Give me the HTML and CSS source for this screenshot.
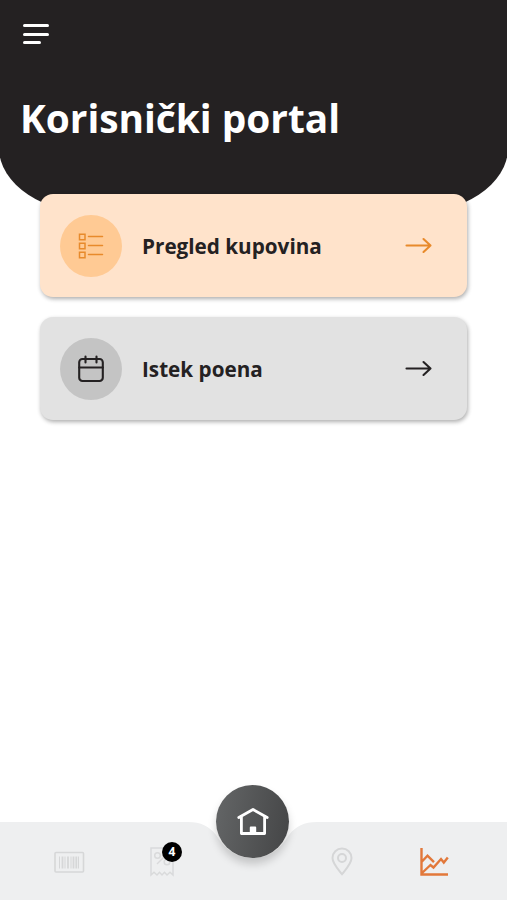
FILE: index.html
```html
<!DOCTYPE html>
<html lang="sr-Latn">
<head>
<meta charset="utf-8">
<meta name="viewport" content="width=device-width, initial-scale=1">
<title>Korisnički portal</title>
<link rel="stylesheet" href="styles.css">
</head>
<body>
<div class="app">
  <header class="header">
    <button class="menu" aria-label="Meni"><span></span><span></span><span class="short"></span></button>
    <h1>Korisnički portal</h1>
  </header>
  <main class="cards">
    <a class="card card-orange">
      <span class="card-icon">
        <svg width="28" height="28" viewBox="0 0 28 28" fill="none" stroke="#e88a2b" stroke-width="1.5" stroke-linecap="round"><path d="M2.500 2.200h5.500v5.500h-5.500zM2.500 11.200h5.500v5.500h-5.500zM2.500 20.200h5.500v5.500h-5.500z"/><path d="M11.500 4.500h14M11.500 13.500h14M11.500 22.500h14"/></svg>
      </span>
      <span class="card-title">Pregled kupovina</span>
      <svg class="arrow" width="28" height="18" viewBox="0 0 28 18"><path d="M1.500 8.500h24M18.500 2l7 6.500-7 6.500"/></svg>
    </a>
    <a class="card card-gray">
      <span class="card-icon">
        <svg width="28" height="28" viewBox="0 0 28 28" fill="none" stroke="#242122" stroke-width="2.1" stroke-linecap="round"><rect x="2.2" y="4" width="23.6" height="22" rx="3.2"/><path d="M2.200 12.500h23.600M8.500 1.500v6M19.500 1.500v6"/></svg>
      </span>
      <span class="card-title">Istek poena</span>
      <svg class="arrow" width="28" height="18" viewBox="0 0 28 18"><path d="M1.500 8.500h24M18.500 2l7 6.500-7 6.500"/></svg>
    </a>
  </main>
  <nav class="nav">
    <svg class="nav-bg" width="507" height="78" viewBox="0 0 507 78"><path d="M0 0H188C201 0 209 4 216 13C226 29 237 36 252.500 36S279 29 289 13C296 4 304 0 317 0H507V78H0Z" fill="#eeeff0"/></svg>
    <a class="tab"><svg width="32" height="24" viewBox="0 0 32 24" fill="none" stroke="#d6d7d8"><rect x="2" y="2.500" width="28.500" height="19.500" rx="1" stroke-width="1.600"/><path d="M6.500 6.500v12M12 6.500v12M18 6.500v12M25.500 6.500v12" stroke-width="1"/><path d="M9.500 6.500v12M15 6.500v12M20.500 6.500v12M23.300 6.500v12" stroke-width="1.800"/></svg></a>
    <a class="tab tab-coupons"><svg width="28" height="32" viewBox="0 0 28 32" fill="none" stroke="#d9dadb" stroke-width="1.500"><path d="M3 2h22v27l-3-2.700-3 2.700-2.500-2.700-2.500 2.700-2.500-2.700L9 29l-3-2.700L3 29Z"/><path d="M20 7L9 18"/><circle cx="9.500" cy="9.500" r="2.800"/><circle cx="19" cy="16" r="2.800"/></svg><span class="badge">4</span></a>
    <a class="home" aria-label="Početna"><svg width="34" height="30" viewBox="0 0 34 30" fill="none" stroke="#fff" stroke-width="2.800" stroke-linejoin="round" stroke-linecap="round"><path d="M2.800 10.500L17 2.500 31.200 10.500M5.400 10v16.500h23.200V10"/><path d="M14.700 26v-5.500h4.600v5.500z" fill="#fff" stroke-width="1.800"/></svg></a>
    <a class="tab tab-right"><svg width="24" height="30" viewBox="0 0 24 30" fill="none" stroke="#d5d6d7" stroke-width="2"><path d="M12 27.200C8 22 2.500 16.500 2.500 11a9.500 9.500 0 0 1 19 0c0 5.500-5.500 11-9.500 16.200Z"/><circle cx="12" cy="11" r="4"/></svg></a>
    <a class="tab tab-right"><svg width="30" height="30" viewBox="0 0 30 30" fill="none" stroke="#e2783a" stroke-width="2.400"><path d="M2.500 1v26.500h26.500M3 14.500l5.500-5.800 6.500 6.500M3 26l8.500-8 3 2.500 7.500-8.500 2.800 3.500 4-5"/></svg></a>
  </nav>
</div>
</body>
</html>
```
FILE: styles.css
```css
* { box-sizing: border-box; }
body { margin: 0; background: #fff; font-family: "Open Sans", "Noto Sans", sans-serif; }
.app { display: flex; flex-direction: column; width: 507px; height: 900px; overflow: hidden; }
.header { flex: none; height: 214px; margin: 0 -1px; padding: 24px 21px 0; background: #242122; border-radius: 0 0 100px 100px / 0 0 66px 66px; }
.menu { display: flex; flex-direction: column; gap: 5.700px; width: 30px; padding: 0 0 0 3px; border: 0; background: none; }
.menu span { width: 26px; height: 3px; border-radius: 2px; background: #fff; }
.menu .short { width: 18px; }
h1 { margin: 46.6px 0 0; font-size: 38.8px; line-height: 54px; font-weight: 700; color: #fff; white-space: nowrap; }
.cards { display: flex; flex-direction: column; gap: 20px; margin-top: -20px; padding: 0 40px; flex: 1; }
.card { display: flex; align-items: center; height: 103px; padding: 0 34px 0 20px; border-radius: 13px; box-shadow: 1px 2px 4px rgba(0, 0, 0, .32); }
.card-orange { background: #ffe3cb; color: #e88a2b; }
.card-gray { background: #e2e2e2; color: #242122; }
.card-icon { display: flex; align-items: center; justify-content: center; width: 62px; height: 62px; border-radius: 50%; }
.card-orange .card-icon { background: #ffca94; }
.card-gray .card-icon { background: #c4c4c4; }
.card-title { flex: 1; margin-left: 20px; font-size: 20.7px; font-weight: 700; color: #242122; white-space: nowrap; }
.arrow { fill: none; stroke: currentColor; stroke-width: 2.1; stroke-linecap: round; stroke-linejoin: round; }
.nav { position: relative; flex: none; display: grid; grid-template-columns: 92px 92px 1fr 92px 92px; height: 78px; padding: 0 25px 0 23px; align-items: center; justify-items: center; }
.nav-bg { position: absolute; left: 0; top: 0; }
.tab { position: relative; display: flex; padding-top: 1px; }
.tab-coupons { margin-left: 2px; }
.tab-right { margin-right: 4px; }
.home { position: relative; display: flex; align-items: center; justify-content: center; width: 73px; height: 73px; margin-top: -79px; border-radius: 50%; background: linear-gradient(100deg, #646667, #444546); box-shadow: 0 6px 9px rgba(0, 0, 0, .18); }
.badge { position: absolute; left: 14px; top: -3px; width: 20px; height: 20px; border-radius: 50%; background: #000; color: #fff; font-size: 12px; line-height: 20px; font-weight: 700; text-align: center; }
```
